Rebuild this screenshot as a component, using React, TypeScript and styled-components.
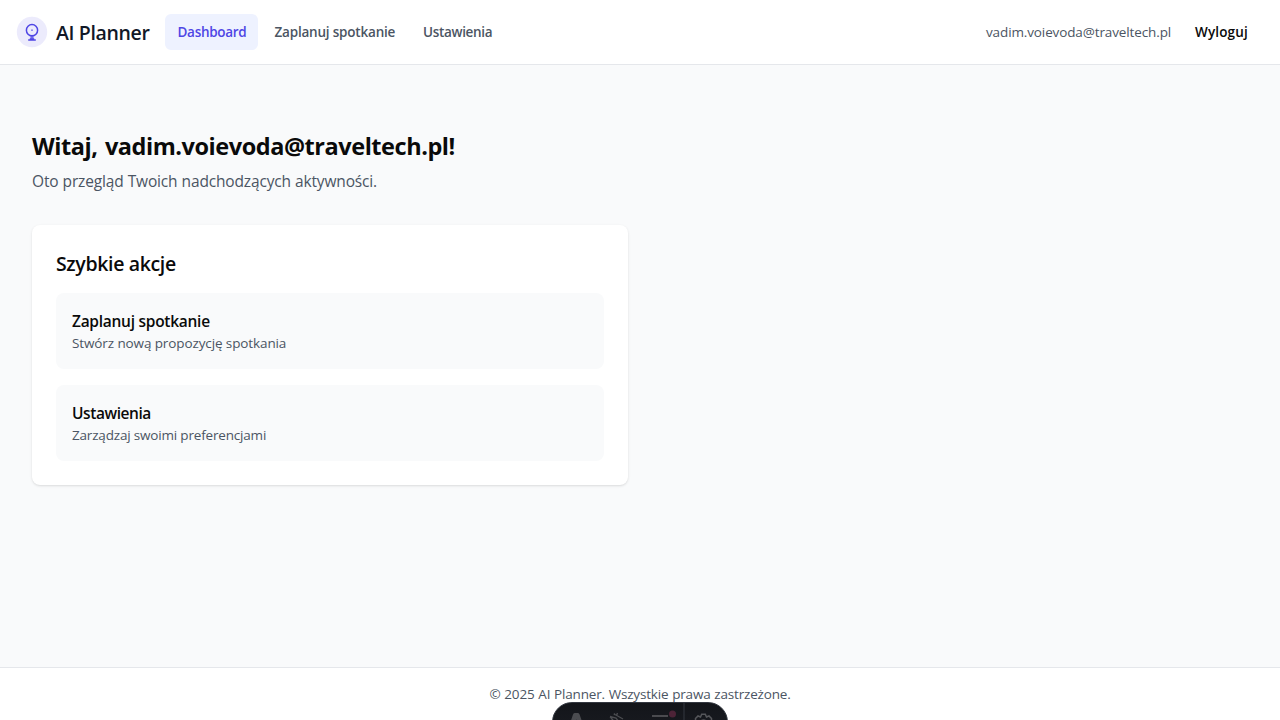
import React from "react";
import styled, { createGlobalStyle } from "styled-components";

const GlobalStyle = createGlobalStyle`
  *, *::before, *::after { box-sizing: border-box; }
  body {
    margin: 0;
    background: #f9fafb;
    color: #0a0a0a;
    font-family: "Segoe UI", "Open Sans", "Noto Sans", sans-serif;
    overflow: hidden;
  }
  h1, h2, h3, p { margin: 0; }
`;

const Page = styled.div`
  height: 720px;
  display: flex;
  flex-direction: column;
  position: relative;
  overflow: hidden;
  white-space: nowrap;
`;

const Header = styled.header`
  height: 65px;
  display: flex;
  align-items: center;
  justify-content: space-between;
  padding: 0 32px 0 16px;
  background: #fff;
  border-bottom: 1px solid #e5e7eb;
`;

const HeaderSide = styled.div<{ $gap: number }>`
  display: flex;
  align-items: center;
  gap: ${(p) => p.$gap}px;
`;

const Brand = styled.a`
  display: flex;
  align-items: center;
  gap: 8px;
  width: 133px;

  svg { flex: none; }
`;

const BrandName = styled.span`
  padding-top: 2px;
  font-size: 19.5px;
  line-height: 28px;
  font-weight: 600;
  letter-spacing: -0.35px;
  color: #111827;
`;

const Nav = styled.nav`
  display: flex;
  gap: 4px;
`;

const NavLink = styled.a<{ $active?: boolean; $width: number; $track: number }>`
  width: ${(p) => p.$width}px;
  padding: 8px 12px 8px 12.5px;
  border-radius: 6px;
  font-size: 13.5px;
  line-height: 20px;
  font-weight: 600;
  letter-spacing: ${(p) => p.$track}px;
  color: ${(p) => (p.$active ? "#4f46e5" : "#4b5563")};
  background: ${(p) => (p.$active ? "#eef2ff" : "transparent")};
`;

const UserEmail = styled.span`
  width: 185px;
  font-size: 13.5px;
  line-height: 20px;
  letter-spacing: -0.12px;
  color: #4b5563;
`;

const Logout = styled.button`
  width: 53px;
  padding: 0;
  border: 0;
  background: none;
  font: 600 13.5px/20px "Segoe UI", "Open Sans", "Noto Sans", sans-serif;
  letter-spacing: 0.15px;
  text-align: left;
  color: #0a0a0a;
`;

const Main = styled.main`
  flex: 1;
  padding: 65px 32px 0;
`;

const Title = styled.h1`
  font-size: 23.5px;
  line-height: 32px;
  font-weight: 700;
  letter-spacing: -0.45px;
  word-spacing: 1.8px;
`;

const Subtitle = styled.p`
  margin-top: 7px;
  font-size: 15.5px;
  line-height: 24px;
  letter-spacing: -0.16px;
  word-spacing: 0.3px;
  color: #4b5563;
`;

const Card = styled.section`
  width: 596px;
  height: 260px;
  margin-top: 32px;
  padding: 25px 24px 24px;
  border-radius: 8px;
  background: #fff;
  box-shadow: 0 1px 3px rgba(0, 0, 0, 0.1), 0 1px 2px -1px rgba(0, 0, 0, 0.1);
`;

const CardTitle = styled.h2`
  margin-bottom: 15px;
  font-size: 19.5px;
  line-height: 28px;
  font-weight: 600;
  letter-spacing: -0.35px;
`;

const Actions = styled.div`
  display: flex;
  flex-direction: column;
  gap: 16px;
`;

const Action = styled.a`
  display: block;
  height: 76px;
  padding: 16px;
  border-radius: 8px;
  background: #f9fafb;
`;

const ActionTitle = styled.h3<{ $track: number }>`
  font-size: 15.5px;
  line-height: 24px;
  font-weight: 600;
  letter-spacing: ${(p) => p.$track}px;
`;

const ActionText = styled.p<{ $track: number }>`
  font-size: 13.5px;
  line-height: 20px;
  letter-spacing: ${(p) => p.$track}px;
  color: #4b5563;
`;

const Footer = styled.footer`
  height: 53px;
  padding-top: 16px;
  display: flex;
  justify-content: center;
  background: #fff;
  border-top: 1px solid #e5e7eb;
`;

const Copyright = styled.p`
  font-size: 13.5px;
  line-height: 20px;
  letter-spacing: -0.18px;
  word-spacing: 0.5px;
  color: #4b5563;
`;

const DevToolbar = styled.div`
  position: absolute;
  left: 552px;
  top: 702px;
  width: 176px;
  height: 40px;
  border: 1px solid #343841;
  border-radius: 20px;
  background: linear-gradient(180deg, #13151a 0%, #1b1d23 100%);
  overflow: hidden;
`;

const LogoIcon = () => (
  <svg width="32" height="32" viewBox="0 0 32 32" fill="none">
    <circle cx="16" cy="16" r="15.2" fill="#4f46e5" fillOpacity="0.11" />
    <circle cx="16" cy="14.2" r="5.6" stroke="#4f46e5" strokeWidth="1.5" />
    <path d="M14.4 19.5h3.2v3.3h-3.2z" fill="#4f46e5" fillOpacity="0.75" />
    <path d="M12.2 24h7.6M13.8 22.8h4.4" stroke="#4f46e5" strokeWidth="1.3" />
    <circle cx="16" cy="14.2" r="0.9" fill="#4f46e5" fillOpacity="0.7" />
  </svg>
);

const ToolbarIcons = () => (
  <svg width="174" height="38" viewBox="553 703 174 38" fill="none">
    <path d="M570.5 722L573 714.4Q573.6 713 575 713H577.6Q579 713 579.6 714.4L582.2 722H578.8Q576.4 717.5 574 722Z" fill="#4b4c50" />
    <path d="M610 716.5L616 718L619 722M615 714.5L623 719M613.8 713.6l1.2 1M617.5 713l-.8 2M610 716.5l4 5" stroke="#4b4c50" strokeWidth="1.4" />
    <path d="M652 716H668" stroke="#5c5d61" strokeWidth="1.6" />
    <path d="M684 703V722" stroke="#343841" />
    <circle cx="672.5" cy="714" r="3.5" fill="#4d2337" />
    <path d="M695.5 721v-2.5l2.5-2.5 2.5 1 1.2-2.8h3.6l1.2 2.8 2.5-1 2.5 2.5v2.5M700.5 722a3.2 3.2 0 0 1 6 0" stroke="#55565a" strokeWidth="1.5" />
  </svg>
);

export default function App() {
  return (
    <Page>
      <GlobalStyle />
      <Header>
        <HeaderSide $gap={16}>
          <Brand>
            <LogoIcon />
            <BrandName>AI Planner</BrandName>
          </Brand>
          <Nav>
            <NavLink $active $width={93} $track={-0.3}>Dashboard</NavLink>
            <NavLink $width={144.5} $track={-0.2}>Zaplanuj spotkanie</NavLink>
            <NavLink $width={93} $track={-0.33}>Ustawienia</NavLink>
          </Nav>
        </HeaderSide>
        <HeaderSide $gap={24}>
          <UserEmail>vadim.voievoda@traveltech.pl</UserEmail>
          <Logout>Wyloguj</Logout>
        </HeaderSide>
      </Header>
      <Main>
        <Title>Witaj, vadim.voievoda@traveltech.pl!</Title>
        <Subtitle>Oto przegląd Twoich nadchodzących aktywności.</Subtitle>
        <Card>
          <CardTitle>Szybkie akcje</CardTitle>
          <Actions>
            <Action>
              <ActionTitle $track={-0.27}>Zaplanuj spotkanie</ActionTitle>
              <ActionText $track={-0.11}>Stwórz nową propozycję spotkania</ActionText>
            </Action>
            <Action>
              <ActionTitle $track={-0.43}>Ustawienia</ActionTitle>
              <ActionText $track={-0.18}>Zarządzaj swoimi preferencjami</ActionText>
            </Action>
          </Actions>
        </Card>
      </Main>
      <Footer>
        <Copyright>© 2025 AI Planner. Wszystkie prawa zastrzeżone.</Copyright>
      </Footer>
      <DevToolbar>
        <ToolbarIcons />
      </DevToolbar>
    </Page>
  );
}
